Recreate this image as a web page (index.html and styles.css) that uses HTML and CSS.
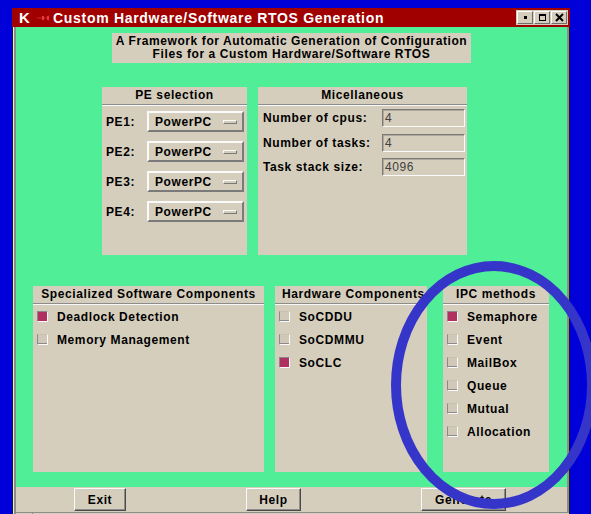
FILE: index.html
```html
<!DOCTYPE html>
<html>
<head>
<meta charset="utf-8">
<title>RTOS Generation</title>
<link rel="stylesheet" href="styles.css">
</head>
<body>
<div class="window">
  <div class="titlebar">
    <span class="kmark">K</span>
    <svg class="pin" width="12" height="8" viewBox="0 0 12 8">
      <path d="M0 4H6" stroke="#d02020" stroke-width="1"/>
      <path d="M5 1V7L8.5 4Z M12 1V7L8.5 4Z" fill="#c81818"/>
      <path d="M6 2V6 M11 2V6" stroke="#ff6060" stroke-width="1"/>
    </svg>
    <span class="title">Custom Hardware/Software RTOS Generation</span>
    <div class="wbtns">
      <span class="wbtn"><i class="g-min"></i></span>
      <span class="wbtn"><i class="g-max"></i></span>
      <span class="wbtn"><svg width="9" height="9" viewBox="0 0 9 9"><path d="M1 1L8 8M8 1L1 8" stroke="#000" stroke-width="2"/></svg></span>
    </div>
  </div>
  <div class="client">
    <div class="frame">
      <div class="area">
        <div class="banner">A Framework for Automatic Generation of Configuration<br>Files for a Custom Hardware/Software RTOS</div>

        <div class="row-top">
          <section class="panel pe">
            <header class="phead">PE selection</header>
            <div class="pe-list">
              <div class="pe-row"><span class="pe-label">PE1:</span><span class="option">PowerPC<i class="ind"></i></span></div>
              <div class="pe-row"><span class="pe-label">PE2:</span><span class="option">PowerPC<i class="ind"></i></span></div>
              <div class="pe-row"><span class="pe-label">PE3:</span><span class="option">PowerPC<i class="ind"></i></span></div>
              <div class="pe-row"><span class="pe-label">PE4:</span><span class="option">PowerPC<i class="ind"></i></span></div>
            </div>
          </section>
          <section class="panel misc">
            <header class="phead">Micellaneous</header>
            <div class="misc-list">
              <div class="misc-row"><span class="misc-label">Number of cpus:</span><span class="field">4</span></div>
              <div class="misc-row"><span class="misc-label">Number of tasks:</span><span class="field">4</span></div>
              <div class="misc-row"><span class="misc-label">Task stack size:</span><span class="field">4096</span></div>
            </div>
          </section>
        </div>

        <div class="row-bottom">
          <section class="panel sw">
            <header class="phead">Specialized Software Components</header>
            <ul class="checks">
              <li><span class="box on"></span>Deadlock Detection</li>
              <li><span class="box"></span>Memory Management</li>
            </ul>
          </section>
          <section class="panel hw">
            <header class="phead left">Hardware Components</header>
            <ul class="checks">
              <li><span class="box"></span>SoCDDU</li>
              <li><span class="box"></span>SoCDMMU</li>
              <li><span class="box on"></span>SoCLC</li>
            </ul>
          </section>
          <section class="panel ipc">
            <header class="phead">IPC methods</header>
            <ul class="checks">
              <li><span class="box on"></span>Semaphore</li>
              <li><span class="box"></span>Event</li>
              <li><span class="box"></span>MailBox</li>
              <li><span class="box"></span>Queue</li>
              <li><span class="box"></span>Mutual</li>
              <li><span class="box"></span>Allocation</li>
            </ul>
          </section>
        </div>
      </div>
      <div class="actions">
        <button class="btn exit">Exit</button>
        <button class="btn help">Help</button>
        <button class="btn gen">Generate</button>
      </div>
      <div class="status"><span class="cell"></span></div>
    </div>
  </div>
</div>
<svg class="mark" width="591" height="514" viewBox="0 0 591 514">
  <ellipse cx="494" cy="385" rx="98" ry="119" fill="none" stroke="#3535c9" stroke-width="10"/>
</svg>
</body>
</html>
```
FILE: styles.css
```css
html, body {
  margin: 0;
  padding: 0;
}
body {
  width: 591px;
  height: 514px;
  overflow: hidden;
  background: #0000d8;
  font-family: "Liberation Sans", Arial, sans-serif;
  font-size: 12px;
  font-weight: bold;
  letter-spacing: 0.6px;
  color: #000;
  position: relative;
}

.window {
  margin: 8px 0 0 12px;
  width: 558px;
}

/* title bar */
.titlebar {
  height: 19px;
  background: #a00000;
  display: flex;
  align-items: center;
  color: #fff;
}
.kmark {
  font-size: 15px;
  font-weight: bold;
  margin-left: 7px;
  width: 14px;
  letter-spacing: 0;
}
.pin {
  margin-left: 4px;
}
.title {
  font-size: 14px;
  margin-left: 4px;
  letter-spacing: 0.7px;
}
.wbtns {
  margin-left: auto;
  margin-right: 2px;
  display: flex;
  gap: 1px;
  background: #d6cebc;
  padding: 1px 1px;
}
.wbtn {
  width: 14px;
  height: 11px;
  border: 1px solid;
  border-color: #fff #6e6e6e #6e6e6e #fff;
  background: #d6cebc;
  display: flex;
  align-items: center;
  justify-content: center;
}
.g-min {
  width: 3px;
  height: 3px;
  background: #000;
}
.g-max {
  width: 5px;
  height: 4px;
  border: 1px solid #000;
  border-top-width: 2px;
}

/* window frame */
.client {
  border-left: 1px solid #1a1a1a;
  border-right: 1px solid #1a1a1a;
}
.frame {
  border-left: 1px solid #ececec;
}
.area {
  background: #50ee96;
  border-left: 2px solid #8c8c8c;
  border-right: 2px solid #8c8c8c;
  height: 460px;
  padding-top: 6px;
  box-sizing: border-box;
}

.banner {
  width: 359px;
  height: 30px;
  margin: 0 auto;
  background: #d6cebc;
  text-align: center;
  line-height: 13px;
  padding-top: 2px;
  box-sizing: border-box;
  white-space: nowrap;
}

/* panels */
.panel {
  background: #d6cebc;
  overflow: hidden;
}
.phead {
  height: 17px;
  line-height: 17px;
  text-align: center;
  white-space: nowrap;
  border-bottom: 1px solid #8c8c8c;
  box-shadow: 0 1px 0 #f8f8f8;
  margin-bottom: 1px;
}
.phead.left {
  text-align: left;
  padding-left: 7px;
}

.row-top {
  display: flex;
  margin-top: 24px;
  padding-left: 86px;
  gap: 11px;
  height: 168px;
}
.pe { width: 145px; }
.misc { width: 209px; }

.pe-list {
  padding: 5px 3px 0 4px;
  display: flex;
  flex-direction: column;
  gap: 9px;
}
.pe-row {
  display: flex;
  align-items: center;
  height: 21px;
}
.pe-label {
  width: 41px;
}
.option {
  width: 97px;
  height: 21px;
  box-sizing: border-box;
  border: 2px solid;
  border-color: #fafafa #7a7a7a #7a7a7a #fafafa;
  display: flex;
  align-items: center;
  padding-left: 6px;
}
.ind {
  margin-left: auto;
  margin-right: 5px;
  width: 14px;
  height: 4px;
  box-sizing: border-box;
  border: 1px solid;
  border-color: #fafafa #7a7a7a #7a7a7a #fafafa;
}

.misc-list {
  padding: 3px 0 0 5px;
  display: flex;
  flex-direction: column;
  gap: 6.5px;
}
.misc-row {
  display: flex;
  align-items: center;
  height: 18px;
}
.misc-label {
  width: 119px;
  white-space: nowrap;
}
.field {
  width: 83px;
  height: 18px;
  box-sizing: border-box;
  border: 1px solid;
  border-color: #7a7a7a #fafafa #fafafa #7a7a7a;
  box-shadow: inset 1px 1px 0 #b0a898;
  font-weight: normal;
  color: #404040;
  line-height: 16px;
  padding-left: 2px;
}

.row-bottom {
  display: flex;
  margin-top: 31px;
  padding-left: 17px;
  height: 186px;
}
.sw { width: 231px; }
.hw { width: 152px; margin-left: 11px; }
.ipc { width: 106px; margin-left: 16px; }

.checks {
  list-style: none;
  margin: 0;
  padding: 0 0 0 4px;
}
.checks li {
  height: 23px;
  display: flex;
  align-items: center;
  white-space: nowrap;
}
.box {
  width: 11px;
  height: 11px;
  box-sizing: border-box;
  margin-right: 9px;
  border: 1px solid;
  border-color: #c8c0b0 #fafafa #fafafa #8a8a8a;
  box-shadow: inset 0 -1px 0 #8a8a8a;
  background: #d0c8b8;
  flex: none;
}
.box.on {
  border-color: #8a8a8a #fafafa #fafafa #8a8a8a;
  box-shadow: none;
  background: #b03060;
}

/* bottom button bar */
.actions {
  background: #d6cebc;
  border-left: 2px solid #8c8c8c;
  border-right: 2px solid #8c8c8c;
  height: 25px;
  padding-top: 1px;
  box-sizing: border-box;
  display: flex;
  align-items: flex-start;
}
.btn {
  font: bold 12px "Liberation Sans", Arial, sans-serif;
  letter-spacing: 0.6px;
  color: #000;
  height: 23px;
  background: #d6cebc;
  border: 1px solid;
  border-color: #fafafa #4a4a4a #4a4a4a #fafafa;
  box-shadow: inset -1px -1px 0 #8c8c8c;
  padding: 0;
  margin-left: 120px;
}
.exit { width: 52px; margin-left: 58px; }
.help { width: 55px; }
.gen { width: 85px; }

.status {
  border-top: 1px solid #8c8c8c;
  border-left: 2px solid #8c8c8c;
  background: #d6cebc;
  height: 10px;
}
.cell {
  display: block;
  margin-left: 16px;
  height: 10px;
  border-left: 1px solid #8c8c8c;
}

/* hand-drawn highlight ring */
.mark {
  position: absolute;
  left: 0;
  top: 0;
  pointer-events: none;
}
```
